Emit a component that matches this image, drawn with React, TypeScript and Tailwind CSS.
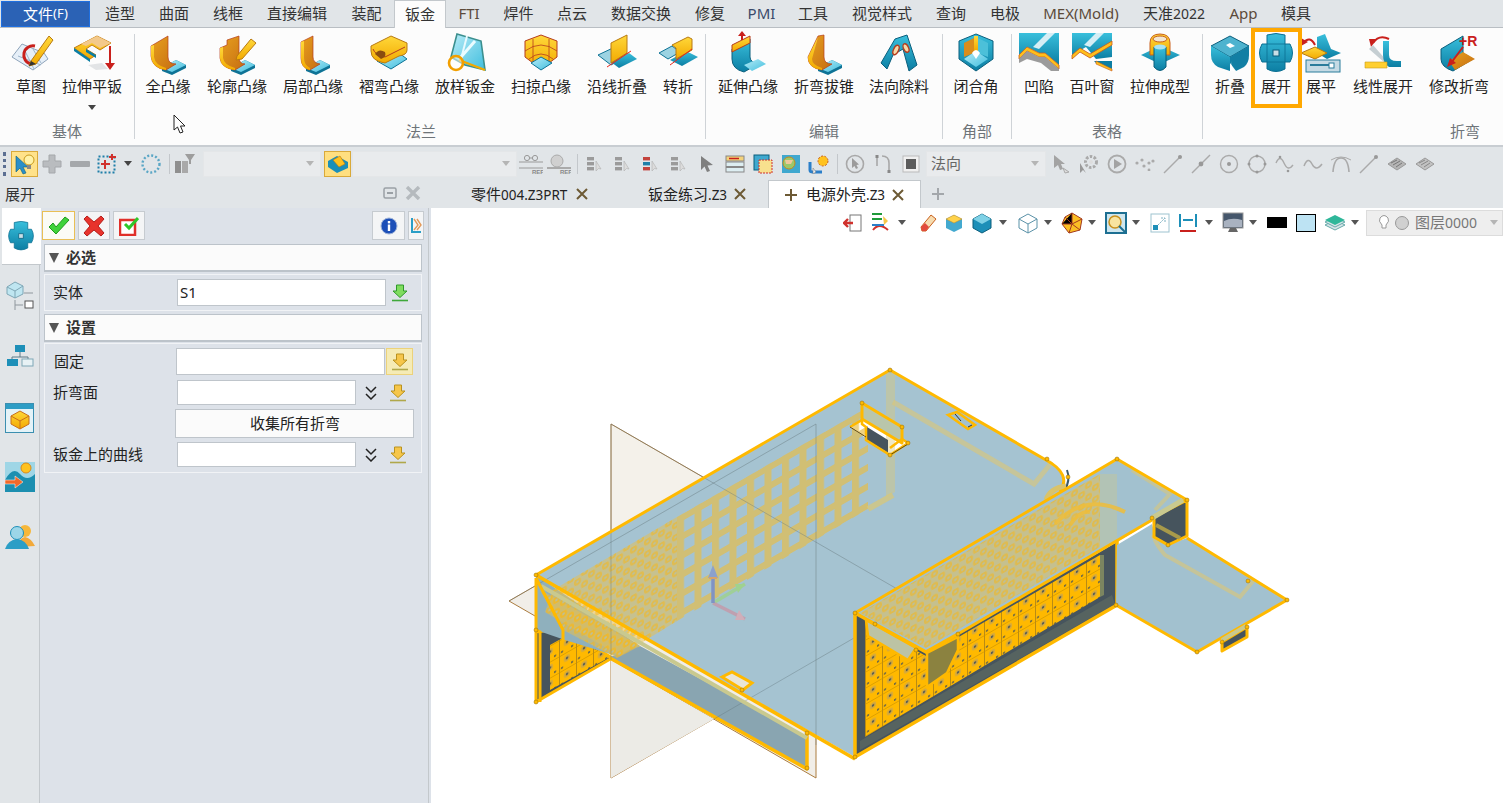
import React from "react";

const FONT = "[font-family:'Noto_Sans','Noto_Sans_CJK_SC',sans-serif]";

function Defs() {
  return (
    <svg className="absolute w-0 h-0" aria-hidden="true">
      <defs>
        <linearGradient id="gy" x1="0" y1="0" x2="0" y2="1"><stop offset="0" stopColor="#ffd83a" /><stop offset="1" stopColor="#f2a900" /></linearGradient>
        <linearGradient id="go" x1="0" y1="0" x2="1" y2="1"><stop offset="0" stopColor="#e9a11e" /><stop offset="1" stopColor="#c56d12" /></linearGradient>
        <linearGradient id="gb" x1="0" y1="0" x2="0" y2="1"><stop offset="0" stopColor="#39bfdc" /><stop offset="1" stopColor="#0c7ea3" /></linearGradient>
        <linearGradient id="gl" x1="0" y1="0" x2="1" y2="1"><stop offset="0" stopColor="#b8ecf7" /><stop offset="1" stopColor="#40bede" /></linearGradient>
        <pattern id="sq" width="17.5" height="19" patternUnits="userSpaceOnUse" patternTransform="matrix(1 -0.577 0 1 677 517)">
          <rect width="7" height="19" fill="#e6bd48" />
          <rect width="17.5" height="7" fill="#e6bd48" />
        </pattern>
        <pattern id="hx" width="14" height="12" patternUnits="userSpaceOnUse" patternTransform="matrix(1 -0.577 0 1 0 0)">
          <rect width="14" height="12" fill="#e8bf50" fillOpacity="0.5" />
          <circle cx="3.5" cy="3" r="3.6" fill="#f6b81c" fillOpacity="0.55" />
          <circle cx="10.5" cy="9" r="3.6" fill="#f6b81c" fillOpacity="0.55" />
          <circle cx="3.5" cy="3" r="1.3" fill="#a2c1cf" fillOpacity="0.6" />
          <circle cx="10.5" cy="9" r="1.3" fill="#a2c1cf" fillOpacity="0.6" />
        </pattern>
        <pattern id="ms" width="17" height="16" patternUnits="userSpaceOnUse" patternTransform="matrix(1 -0.577 0 1 865 640)">
          <rect width="17" height="16" fill="#ffb900" />
          <path d="M0 0V16" stroke="#6d5a2a" strokeWidth="0.9" />
          <path d="M0 0H17" stroke="#c98f00" strokeWidth="1.2" />
          <circle cx="8" cy="6" r="3.2" fill="#d9ab38" />
          <circle cx="8" cy="6" r="1.2" fill="#45525a" />
          <circle cx="3" cy="13" r="1.1" fill="#45525a" />
          <circle cx="13" cy="13" r="1.1" fill="#45525a" />
        </pattern>
      </defs>
    </svg>
  );
}

type P = { children: React.ReactNode };
const I40 = ({ children }: P) => <svg className="block overflow-visible" width="40" height="40" viewBox="0 0 40 40">{children}</svg>;

const Base = ({ d = 0 }: { d?: number }) => (
  <g transform={`translate(${d} 0)`}>
    <path d="M14 35 L28 27 L38 32 V35 L24 42 L14 38Z" fill="#0e7396" />
    <path d="M14 35 L28 27 L38 32 L24 39Z" fill="url(#gl)" />
  </g>
);

const Ico: Record<string, React.ReactNode> = {
  sketch: (
    <I40>
      <path d="M1 24 L11 11 L33 20 L37 26 L22 37Z" fill="#e6eff8" stroke="#8fa4ba" />
      <path d="M7 23 L30 32 M13 16 L23 36 M22 16 L30 30" stroke="#9db5cb" />
      <path d="M24 13 A9 9 0 1 0 20 31" fill="none" stroke="#c9201c" strokeWidth="3" />
      <path d="M20 28 L38 3 L42 7 L25 31 L18 33Z" fill="url(#gy)" stroke="#b97a10" />
      <path d="M18 33 L20 28 L25 31Z" fill="#333" />
    </I40>
  ),
  extrude: (
    <I40>
      <path d="M2 15 L25 3 L39 10 L28 17 L20 12 L14 16 L24 22 L18 26Z" fill="url(#gy)" stroke="#c57c10" />
      <path d="M2 15 L18 26 V29 L2 18Z M24 22 L14 16 V19 L24 25Z" fill="#0c7ea3" />
      <path d="M25 3 L39 10 L28 15 L20 10 L14 13 L9 11Z" fill="#f3c98b" />
      <path d="M38 13 V32" stroke="#c9201c" strokeWidth="2" />
      <path d="M33 30 H43 L38 37Z" fill="#c9201c" />
      <path d="M16 32 L30 30 L36 36 L24 37Z" fill="#e2e4e6" />
    </I40>
  ),
  full: (
    <I40>
      <Base />
      <path d="M3 13 L20 3 V24 Q20 31 28 31 L18 37 Q4 35 3 23Z" fill="url(#go)" stroke="#b53c1d" strokeWidth="0.7" />
      <path d="M3 13 L6 12 V24 Q7 32 18 35 V37 Q4 35 3 23Z" fill="url(#gy)" />
    </I40>
  ),
  contour: (
    <I40>
      <Base />
      <path d="M3 15 L10 12 V7 L22 3 V24 Q22 31 28 31 L18 37 Q4 35 3 25Z" fill="url(#go)" stroke="#b53c1d" strokeWidth="0.7" />
      <path d="M3 15 L6 14 V25 Q7 32 18 35 V37 Q4 35 3 25Z" fill="url(#gy)" />
      <path d="M20 23 L34 6 L39 10 L25 26 L19 27Z" fill="url(#gy)" stroke="#b97a10" />
    </I40>
  ),
  partial: (
    <I40>
      <Base d={-1} />
      <path d="M8 9 L20 3 V24 Q20 30 27 31 L17 37 Q8 35 8 25Z" fill="url(#go)" stroke="#b53c1d" strokeWidth="0.7" />
      <path d="M8 9 L11 8 V25 Q11 32 17 35 V37 Q8 35 8 25Z" fill="url(#gy)" />
    </I40>
  ),
  hem: (
    <I40>
      <path d="M8 28 L30 20 L38 26 L22 36Z" fill="url(#gl)" stroke="#0e7396" />
      <path d="M2 13 L22 3 L38 10 V17 Q38 22 30 23 L16 30 Q2 28 2 18Z" fill="url(#gy)" stroke="#b87a12" />
      <path d="M4 16 Q6 22 16 24 L36 14" fill="none" stroke="#b53c1d" />
      <path d="M6 21 Q10 15 16 19 Q18 24 12 26Z" fill="#8a4c10" />
    </I40>
  ),
  loft: (
    <I40>
      <path d="M12 1 L36 8 L40 37 L20 32 L6 24Z" fill="url(#gl)" stroke="#3b8f8e" strokeWidth="1.6" />
      <path d="M22 3 L16 26" stroke="#e8fafd" strokeWidth="2" />
      <path d="M30 8 L16 24" stroke="#eafcff" strokeWidth="3" />
      <path d="M14 27 L40 37" stroke="#f2a900" strokeWidth="2.4" />
      <circle cx="11" cy="30" r="7" fill="#fff" fillOpacity="0.5" stroke="#f29f00" strokeWidth="2.6" />
    </I40>
  ),
  sweep: (
    <I40>
      <path d="M4 8 L20 2 L36 8 V24 L20 36 L4 24Z" fill="url(#gy)" stroke="#b53c1d" />
      <path d="M4 18 Q20 6 36 18 M12 6 V30 M28 6 V30 M8 26 Q20 16 32 26" fill="none" stroke="#b53c1d" strokeWidth="0.8" />
      <path d="M10 30 L20 24 L31 30 L20 37Z" fill="url(#gl)" stroke="#0e7396" />
    </I40>
  ),
  along: (
    <I40>
      <path d="M1 22 L18 14 L32 22 L14 32Z" fill="#9cd3e2" stroke="#0e7396" />
      <path d="M14 29 L32 20 L40 26 L22 35Z" fill="url(#gb)" />
      <path d="M14 10 L30 2 L30 20 L14 30Z" fill="url(#gy)" stroke="#b87a12" />
      <path d="M10 34 L34 18" stroke="#e8261c" />
    </I40>
  ),
  jog: (
    <I40>
      <path d="M1 20 L14 13 L22 19 L10 26Z" fill="#9cd3e2" stroke="#0e7396" />
      <path d="M12 27 L28 18 L40 24 L24 33Z" fill="url(#gb)" />
      <path d="M14 12 L30 4 L34 6 V17 L18 26 V15Z" fill="url(#gy)" stroke="#b87a12" />
      <path d="M12 32 L34 16" stroke="#e8261c" />
    </I40>
  ),
  extend: (
    <I40>
      <path d="M4 16 L22 6 V24 Q22 29 30 31 L16 39 Q4 36 4 26Z" fill="url(#gb)" stroke="#0b5f7d" />
      <path d="M16 32 L30 26 L38 31 L24 38Z" fill="url(#gl)" />
      <path d="M4 12 L22 3 V10 L4 19Z" fill="url(#gy)" stroke="#b53c1d" />
      <path d="M14 7 V0" stroke="#c9201c" strokeWidth="2" />
      <path d="M10 3 H18 L14 -2Z" fill="#c9201c" />
    </I40>
  ),
  taper: (
    <I40>
      <Base />
      <path d="M4 24 L14 3 L20 2 V24 Q20 31 28 31 L18 37 Q4 35 4 24Z" fill="url(#go)" stroke="#b53c1d" strokeWidth="0.7" />
      <path d="M4 24 L14 4 L8 26 Q8 32 18 35 V37 Q4 35 4 24Z" fill="url(#gy)" />
    </I40>
  ),
  cut: (
    <I40>
      <path d="M2 30 L16 6 L28 2 L38 32 L30 38 L24 16 L14 22 L8 36Z" fill="url(#gb)" stroke="#0b5f7d" />
      <ellipse cx="17" cy="17" rx="2.5" ry="5" transform="rotate(25 17 17)" fill="#f5d9a8" stroke="#b53c1d" strokeWidth="1.4" />
      <ellipse cx="27" cy="15" rx="2.5" ry="4.5" transform="rotate(-25 27 15)" fill="#f5d9a8" stroke="#b53c1d" strokeWidth="1.4" />
    </I40>
  ),
  corner: (
    <I40>
      <path d="M3 8 L20 1 L37 8 V26 L20 38 L3 26Z" fill="url(#gb)" stroke="#0b5f7d" />
      <path d="M8 10 L18 5 V20 L8 24Z" fill="#d98d1c" />
      <path d="M22 5 L32 10 V24 L22 20Z" fill="#4cc0d9" />
      <path d="M18 3 H22 V18 H18Z" fill="url(#gy)" />
      <path d="M20 18 L32 26 L20 34 L8 26Z" fill="url(#gl)" />
      <path d="M16 20 Q20 14 24 20 L20 26Z" fill="#fff" />
    </I40>
  ),
  dimple: (
    <I40>
      <path d="M0 0 H40 V32 L26 20 L20 20 L8 14 L0 22Z" fill="url(#gb)" />
      <path d="M28 0 L14 14 L20 16 L36 0Z" fill="#d5eef5" />
      <path d="M0 22 L8 14 L20 20 L26 20 L40 32 V36 L26 24 L20 24 L8 18 L0 26Z" fill="#ffbf1a" stroke="#c75a1b" strokeWidth="0.8" />
      <path d="M0 26 L8 18 L20 24 L26 24 L40 36 V38 H32 L22 30 L8 26 L0 30Z" fill="#9b9b9b" />
    </I40>
  ),
  louver: (
    <I40>
      <path d="M0 0 H40 V24 L24 26 L14 14 L0 22Z" fill="url(#gb)" />
      <path d="M24 0 L12 12 L18 14 L32 0Z" fill="#d5eef5" />
      <path d="M0 22 L8 15 L18 21 L40 8 V12 L18 25 L8 19 L0 26Z" fill="#ffbf1a" stroke="#c75a1b" strokeWidth="0.8" />
      <path d="M22 28 H40 V36 L24 30Z" fill="#0c7ea3" />
      <path d="M24 28 L40 36 V38 L24 31Z" fill="#ffbf1a" stroke="#c75a1b" strokeWidth="0.6" />
    </I40>
  ),
  stamp: (
    <I40>
      <path d="M1 22 L20 13 L40 22 L20 31Z" fill="url(#gb)" />
      <path d="M10 10 Q10 1 20 1 Q30 1 30 10 V22 H10Z" fill="url(#gy)" stroke="#c9601c" />
      <ellipse cx="20" cy="6" rx="7" ry="3" fill="#f2e6d0" stroke="#c9601c" />
      <path d="M14 14 H26 V34 Q20 41 14 34Z" fill="url(#gb)" stroke="#0b5f7d" />
      <ellipse cx="20" cy="14" rx="6" ry="2.5" fill="#a9e3f0" />
    </I40>
  ),
  fold: (
    <I40>
      <path d="M1 13 L20 3 L39 13 L20 24Z" fill="#4eb3cf" stroke="#0b5f7d" />
      <path d="M1 13 L20 24 V38 L8 34 Q1 30 1 22Z" fill="url(#gb)" />
      <path d="M39 13 L20 24 V30 L26 38 L34 34 Q39 30 39 22Z" fill="#127fa4" />
      <path d="M22 28 Q20 36 26 38 L20 38Z" fill="#fff" />
      <path d="M16 12 L20 10 L25 13 L20 15Z" fill="#fff" />
    </I40>
  ),
  unfold: (
    <I40>
      <path d="M11 2 Q20 -1 29 2 V11 H34 Q39 20 34 29 H29 V36 Q20 41 11 36 V29 H6 Q1 20 6 11 H11Z" fill="url(#gb)" stroke="#0b6f92" />
      <path d="M11 11 H29 M11 29 H29 M11 11 V29 M29 11 V29" stroke="#0b6f92" strokeWidth="0.8" fill="none" />
      <rect x="17" y="17" width="6" height="6" fill="#c9dfe6" stroke="#0b5f7d" />
    </I40>
  ),
  flatten: (
    <I40>
      <path d="M16 4 L24 1 L30 16 L40 20 L26 26 L16 20Z" fill="url(#gb)" />
      <path d="M0 20 L14 14 L26 20 L14 26Z" fill="url(#gy)" stroke="#b87a12" />
      <path d="M14 12 Q9 2 2 10" fill="none" stroke="#c9201c" strokeWidth="2" />
      <path d="M0 5 L7 9 L0 13Z" fill="#c9201c" />
      <rect x="5" y="27" width="34" height="12" fill="#c5dae4" stroke="#2a7c9b" />
      <path d="M9 32 H28" stroke="#2a7c9b" strokeWidth="2" />
      <rect x="28" y="30" width="5" height="5" fill="#fff" stroke="#2a7c9b" />
    </I40>
  ),
  linear: (
    <I40>
      <path d="M26 6 Q16 1 10 10" fill="none" stroke="#c9201c" strokeWidth="2" />
      <path d="M6 6 L14 6 L8 14Z" fill="#c9201c" />
      <path d="M10 12 L24 28 L22 30 L6 16Z" fill="#c5ced2" />
      <path d="M20 8 H26 V22 Q26 28 34 28 H38 V34 H26 Q20 30 20 22Z" fill="url(#gb)" />
      <path d="M2 29 H24 V35 H2Z" fill="#ffcf30" stroke="#c79a1c" strokeWidth="0.6" />
    </I40>
  ),
  modify: (
    <I40>
      <path d="M2 16 L24 3 V20 L34 26 L14 38 Q2 34 2 26Z" fill="url(#gb)" stroke="#0b5f7d" />
      <path d="M10 28 L24 19 L36 26 L16 37Z" fill="url(#go)" />
      <path d="M24 14 L12 30" stroke="#c9201c" strokeWidth="2" />
      <path d="M8 34 L11 25 L17 30Z" fill="#c9201c" />
      <text x="20" y="13" fontSize="14" fontWeight="700" fill="#c9201c" fontFamily="Liberation Sans">+R</text>
    </I40>
  ),
};

function Item({ w, label, icon, caret }: { w: string; label: string; icon: string; caret?: boolean }) {
  return (
    <div className={`${w} shrink-0 flex flex-col items-center`}>
      <div className="h-[40px] w-[40px]">{Ico[icon]}</div>
      <div className="mt-[2px] text-[15px] leading-[22px] text-[#222] whitespace-nowrap">{label}</div>
      {caret && <div className="mt-[8px] w-0 h-0 border-x-[4px] border-x-transparent border-t-[5px] border-t-[#444]" />}
    </div>
  );
}

function Group({ w, label, labelCls, children }: { w: string; label: string; labelCls?: string; children: React.ReactNode }) {
  return (
    <div className={`${w} shrink-0 relative flex flex-col justify-between pt-[5px] pb-[4px]`}>
      <div className="flex">{children}</div>
      <div className={`text-[15px] leading-[20px] text-[#6e7479] ${labelCls ?? "text-center"}`}>{label}</div>
    </div>
  );
}
const Div = () => <div className="w-px my-[6px] bg-[#cfd3d7] shrink-0" />;

const menus: [string, string][] = [
  ["造型", "w-[54px]"], ["曲面", "w-[54px]"], ["线框", "w-[54px]"], ["直接编辑", "w-[84px]"], ["装配", "w-[55px]"],
];
const menus2: [React.ReactNode, string, string?][] = [
  ["FTI", "w-[46px]", "text-[#5b4a3a]"], ["焊件", "w-[53px]"], ["点云", "w-[54px]"], ["数据交换", "w-[84px]"], ["修复", "w-[54px]"],
  ["PMI", "w-[49px]", "text-[#3a4a6a]"], ["工具", "w-[54px]"], ["视觉样式", "w-[84px]"], ["查询", "w-[54px]"], ["电极", "w-[54px]"],
  ["MEX(Mold)", "w-[98px]", "text-[#5b4a3a]"], [<>天准<span className="text-[14px]">2022</span></>, "w-[88px]"], ["App", "w-[51px]", "text-[#5b4a3a]"], ["模具", "w-[54px]"],
];

function MenuBar() {
  return (
    <div className="h-[28px] flex bg-[#e1e5e8] border-b border-[#b9bec3] text-[15px] text-[#333]">
      <div className="ml-[1px] mt-[1px] w-[89px] h-[26px] bg-[#2b62b5] border border-[#1f6fe0] text-white flex items-center justify-center">文件<span className="text-[13px]">(F)</span></div>
      <div className="w-[3px]" />
      {menus.map(([t, w]) => <div key={t} className={`${w} flex items-center justify-center`}>{t}</div>)}
      <div className="w-[52px] h-[28px] bg-[#fcfcfc] border border-b-0 border-[#c3c8cc] flex items-center justify-center">钣金</div>
      {menus2.map(([t, w, c], i) => <div key={i} className={`${w} flex items-center justify-center ${c ?? ""}`}>{t}</div>)}
    </div>
  );
}

function Ribbon() {
  return (
    <div className="h-[119px] flex bg-[#fcfcfc] border-b-2 border-[#c8cdd2]">
      <Group w="w-[134px]" label="基体">
        <Item w="w-[62px]" label="草图" icon="sketch" />
        <Item w="w-[60px]" label="拉伸平钣" icon="extrude" caret />
      </Group>
      <Div />
      <Group w="w-[570px]" label="法兰" labelCls="pl-[271px]">
        <Item w="w-[66px]" label="全凸缘" icon="full" />
        <Item w="w-[72px]" label="轮廓凸缘" icon="contour" />
        <Item w="w-[80px]" label="局部凸缘" icon="partial" />
        <Item w="w-[72px]" label="褶弯凸缘" icon="hem" />
        <Item w="w-[80px]" label="放样钣金" icon="loft" />
        <Item w="w-[72px]" label="扫掠凸缘" icon="sweep" />
        <Item w="w-[80px]" label="沿线折叠" icon="along" />
        <Item w="w-[42px]" label="转折" icon="jog" />
      </Group>
      <Div />
      <Group w="w-[236px]" label="编辑">
        <Item w="w-[84px]" label="延伸凸缘" icon="extend" />
        <Item w="w-[68px]" label="折弯拔锥" icon="taper" />
        <Item w="w-[82px]" label="法向除料" icon="cut" />
      </Group>
      <Div />
      <Group w="w-[68px]" label="角部">
        <Item w="w-[66px]" label="闭合角" icon="corner" />
      </Group>
      <Div />
      <Group w="w-[190px]" label="表格">
        <Item w="w-[54px]" label="凹陷" icon="dimple" />
        <Item w="w-[52px]" label="百叶窗" icon="louver" />
        <Item w="w-[84px]" label="拉伸成型" icon="stamp" />
      </Group>
      <Div />
      <Group w="w-[300px]" label="折弯" labelCls="pl-[247px]">
        <Item w="w-[54px]" label="折叠" icon="fold" />
        <div className="relative w-[38px] shrink-0">
          <Item w="w-[38px]" label="展开" icon="unfold" />
          <div className="absolute left-[-6px] top-[-5px] w-[51px] h-[80px] border-[4px] border-[#ffa800]" />
        </div>
        <Item w="w-[52px]" label="展平" icon="flatten" />
        <Item w="w-[72px]" label="线性展开" icon="linear" />
        <Item w="w-[80px]" label="修改折弯" icon="modify" />
      </Group>
    </div>
  );
}

const G = "#9a9a9a";
const Tb = ({ children, w = "w-[28px]" }: { children: React.ReactNode; w?: string }) => (
  <div className={`${w} h-[26px] shrink-0 flex items-center justify-center`}>{children}</div>
);
const Caret = ({ c = "#555", w = "w-[10px]" }: { c?: string; w?: string }) => (
  <div className={`${w} shrink-0 flex justify-center`}>
    <svg width="8" height="5" viewBox="0 0 8 5"><path d="M0 0H8L4 5Z" fill={c} /></svg>
  </div>
);
const Sep = () => <div className="w-[8px] shrink-0 flex justify-center"><div className="w-px h-[20px] bg-[#c3c7cb]" /></div>;
const Combo = ({ w, ml, text }: { w: string; ml?: string; text?: string }) => (
  <div className={`${w} ${ml ?? ""} h-[26px] shrink-0 bg-[#e9ebed] flex items-center justify-between pl-[4px] pr-[6px] text-[15px] text-[#666] border border-[#e4e6e8]`}>
    <span>{text}</span>
    <svg width="8" height="5" viewBox="0 0 8 5"><path d="M0 0H8L4 5Z" fill="#b5b5b5" /></svg>
  </div>
);

function Toolbar() {
  return (
    <div className="h-[33px] flex items-center bg-[#e1e5e8]">
      <div className="w-[3px]" />
      <div className="w-[3px] h-[24px] border-l-[3px] border-dotted border-[#5c6f92]" />
      <div className="w-[5px]" />
      <div className="w-[27px] h-[26px] bg-[#ffe28a] border border-[#d9a93a] shrink-0 flex items-center justify-center">
        <svg width="22" height="22" viewBox="0 0 22 22">
          <path d="M2 3 L2 19 L6 15 L9 21 L12 20 L9 14 L14 14Z" fill="#2b8fc9" stroke="#0b5f7d" strokeWidth="0.6" />
          <circle cx="15" cy="7" r="5" fill="#fff2a8" stroke="#c99a1c" />
          <rect x="13" y="12" width="4" height="4" fill="#888" />
        </svg>
      </div>
      <Tb><svg width="20" height="20" viewBox="0 0 20 20"><path d="M7 1H13V7H19V13H13V19H7V13H1V7H7Z" fill="#b9bcbf" stroke="#a5a8ab" /></svg></Tb>
      <Tb><svg width="20" height="8" viewBox="0 0 20 8"><rect y="1" width="20" height="6" rx="1" fill="#a5a8ab" /></svg></Tb>
      <Tb w="w-[26px]"><svg width="20" height="20" viewBox="0 0 20 20"><rect x="1.5" y="2.5" width="16" height="16" fill="none" stroke="#1f7fa8" strokeWidth="2" strokeDasharray="2 2" /><path d="M8 6V15M4 10H13M15 0V6M12 3H19" stroke="#d0312d" strokeWidth="2" /></svg></Tb>
      <Caret c="#444" w="w-[16px]" />
      <div className="w-px" />
      <Tb><svg width="20" height="20" viewBox="0 0 20 20"><circle cx="10" cy="10" r="8.5" fill="none" stroke="#5aa6c5" strokeWidth="2.4" strokeDasharray="2 2" /></svg></Tb>
      <div className="w-[4px]" /><div className="w-px h-[20px] bg-[#c3c7cb]" /><div className="w-px" />
      <Tb><svg width="22" height="22" viewBox="0 0 22 22"><rect x="1" y="8" width="6" height="12" fill="#8f8f8f" /><rect x="8" y="8" width="6" height="12" fill="#a9a9a9" /><path d="M11 1H21L17 7V11H15V7Z" fill="#9d9d9d" /></svg></Tb>
      <div className="w-[4px]" />
      <Combo w="w-[118px]" />
      <div className="w-[3px]" />
      <div className="w-[27px] h-[26px] bg-[#ffdf80] border border-[#d9a93a] shrink-0 flex items-center justify-center">
        <svg width="22" height="20" viewBox="0 0 22 20"><path d="M1 7 L10 2 L21 8 L21 14 L10 19 L1 13Z" fill="#1b8fb8" /><path d="M6 6 L13 2 L18 10 L12 13Z" fill="#ffc21f" stroke="#b87a12" strokeWidth="0.6" /></svg>
      </div>
      <Combo w="w-[165px]" ml="ml-[1px]" />
      <Tb><svg width="24" height="20" viewBox="0 0 24 20"><path d="M0 8H24M0 14H24" stroke={G} /><circle cx="8" cy="4" r="2.6" fill="none" stroke="#999" /><circle cx="16" cy="4" r="2.6" fill="none" stroke="#999" /><path d="M10 4H14" stroke="#999" /><text x="13" y="20" fontSize="6" fill="#888" fontFamily="Liberation Sans" fontWeight="700">REF</text></svg></Tb>
      <Tb><svg width="24" height="20" viewBox="0 0 24 20"><circle cx="10" cy="7" r="6" fill="#d0d0d0" stroke="#aaa" /><path d="M0 14H24" stroke="#aaa" strokeWidth="2" /><text x="13" y="20" fontSize="6" fill="#888" fontFamily="Liberation Sans" fontWeight="700">REF</text></svg></Tb>
      <Sep />
      {["#9b9b9b", "#9b9b9b", "#c3433d", "#9b9b9b"].map((c, i) => (
        <Tb key={i}>
          <svg width="18" height="16" viewBox="0 0 18 16">
            <rect x="1" y="1" width="7" height="3.4" fill={c} />
            <rect x="1" y="6" width="7" height="3.4" fill={i === 2 ? "#1f7fa8" : c} />
            <rect x="1" y="11" width="7" height="3.4" fill={c} />
            <path d="M10 5 V15 L12.5 12.5 L15 13 Z" fill="#dcdcdc" stroke="#b0b0b0" strokeWidth="0.6" />
          </svg>
        </Tb>
      ))}
      <Tb><svg width="14" height="18" viewBox="0 0 14 18"><path d="M1 1 V15 L4.5 11.5 L7 17 L10 16 L7.5 10.5 L13 10Z" fill="#7f7f7f" /></svg></Tb>
      <Tb><svg width="20" height="18" viewBox="0 0 20 18"><rect x="1" y="1" width="18" height="5" fill="#f4d27a" stroke="#888" /><path d="M4 3.5H14" stroke="#c9201c" strokeWidth="1.5" /><rect x="1" y="7" width="18" height="4.5" fill="#ddeef2" stroke="#888" /><rect x="1" y="12.5" width="18" height="4.5" fill="#ddeef2" stroke="#888" /></svg></Tb>
      <Tb><svg width="20" height="20" viewBox="0 0 20 20"><rect x="1" y="1" width="15" height="15" fill="#3fa8cf" stroke="#0b5f7d" /><rect x="6" y="6" width="13" height="13" fill="#f8e08e" stroke="#d0312d" strokeDasharray="2 1" /></svg></Tb>
      <Tb><svg width="20" height="20" viewBox="0 0 20 20"><rect x="1" y="1" width="18" height="18" fill="#3fa8cf" /><circle cx="8" cy="9" r="6" fill="#9cc86a" stroke="#c98a1c" /><path d="M4 6H12L10 10H5Z" fill="#f0c79a" /></svg></Tb>
      <Tb><svg width="22" height="20" viewBox="0 0 22 20"><path d="M2 8 V16 Q2 18 5 18 H14" fill="none" stroke="#2b7fc9" strokeWidth="3" /><circle cx="15" cy="7" r="5" fill="#ffc21f" stroke="#c9601c" strokeDasharray="2 1.5" /><path d="M5 14 V20 L8 18Z" fill="#eee" stroke="#777" strokeWidth="0.5" /></svg></Tb>
      <Sep />
      <Tb><svg width="20" height="20" viewBox="0 0 20 20"><circle cx="10" cy="10" r="8.5" fill="none" stroke="#a8a8a8" strokeWidth="1.6" /><path d="M7 4 V14 L9.5 12 L11 15 L13 14 L11.5 11 L14 10.5Z" fill="#9b9b9b" /></svg></Tb>
      <Tb><svg width="18" height="20" viewBox="0 0 18 20"><path d="M3 3V12M15 19V9Q15 2 8 2" fill="none" stroke="#a8a8a8" strokeWidth="1.6" /><rect x="1.5" y="1" width="3" height="3" fill="#888" /><rect x="13.5" y="16" width="3" height="3" fill="#888" /></svg></Tb>
      <Tb><svg width="18" height="18" viewBox="0 0 18 18"><rect x="1" y="1" width="16" height="16" fill="#f0f0f0" stroke="#bbb" /><rect x="4" y="4" width="10" height="10" fill="#5c5c5c" /></svg></Tb>
      <Combo w="w-[120px]" ml="ml-[1px]" text="法向" />
      <div className="w-px" />
      <Tb><svg width="20" height="20" viewBox="0 0 20 20"><path d="M3 1 V14 L7 11 L9 16 L12 15 L10 10 L14 10Z" fill="#a3a3a3" /><path d="M12 14 L18 18 L14 19Z" fill="#ddd" stroke="#aaa" /></svg></Tb>
      <Tb><svg width="20" height="20" viewBox="0 0 20 20"><circle cx="12" cy="8" r="5.5" fill="none" stroke="#aaa" strokeWidth="3" strokeDasharray="2.5 1.5" /><circle cx="12" cy="8" r="2" fill="#ddd" /><path d="M1 9 V19 L4 16 L7 19Z" fill="#999" /></svg></Tb>
      <Tb><svg width="20" height="20" viewBox="0 0 20 20"><circle cx="10" cy="10" r="8.5" fill="none" stroke="#aaa" strokeWidth="1.8" /><path d="M7 5 L15 10 L7 15Z" fill="#a3a3a3" /></svg></Tb>
      <Tb><svg width="20" height="14" viewBox="0 0 20 14"><g fill="#aaa"><circle cx="2" cy="6" r="1.6" /><circle cx="7" cy="3" r="1.6" /><circle cx="9" cy="9" r="1.6" /><circle cx="14" cy="6" r="1.6" /><circle cx="14" cy="13" r="1.4" /><circle cx="18" cy="4" r="1.6" /></g></svg></Tb>
      <Tb><svg width="20" height="20" viewBox="0 0 20 20"><path d="M1 19L18 2" stroke="#aaa" strokeWidth="1.4" /><circle cx="17" cy="3" r="2" fill="#999" /></svg></Tb>
      <Tb><svg width="20" height="20" viewBox="0 0 20 20"><path d="M1 19L19 1" stroke="#aaa" strokeWidth="1.4" /><circle cx="10" cy="10" r="2.4" fill="#999" /></svg></Tb>
      <Tb><svg width="20" height="20" viewBox="0 0 20 20"><circle cx="10" cy="10" r="8.5" fill="none" stroke="#aaa" strokeWidth="1.4" /><circle cx="10" cy="10" r="2" fill="#999" /></svg></Tb>
      <Tb><svg width="20" height="20" viewBox="0 0 20 20"><circle cx="10" cy="10" r="8" fill="none" stroke="#aaa" strokeWidth="1.4" /><g fill="#999"><circle cx="10" cy="2" r="1.5" /><circle cx="10" cy="18" r="1.5" /><circle cx="2" cy="10" r="1.5" /><circle cx="18" cy="10" r="1.5" /></g></svg></Tb>
      <Tb><svg width="20" height="20" viewBox="0 0 20 20"><path d="M1 9 Q5 0 9 9 T18 11" fill="none" stroke="#aaa" strokeWidth="1.4" /><circle cx="5" cy="3" r="1.3" fill="#999" /><circle cx="13" cy="17" r="1.3" fill="#999" /></svg></Tb>
      <Tb><svg width="20" height="16" viewBox="0 0 20 16"><path d="M1 10 Q5 0 9 8 T19 8" fill="none" stroke="#aaa" strokeWidth="1.5" /></svg></Tb>
      <Tb><svg width="22" height="18" viewBox="0 0 22 18"><path d="M3 17 Q4 3 11 3 Q18 3 19 17" fill="none" stroke="#aaa" strokeWidth="1.6" /><path d="M1 5 Q11 -1 21 5" fill="none" stroke="#aaa" /></svg></Tb>
      <Tb><svg width="20" height="20" viewBox="0 0 20 20"><path d="M1 19L17 3" stroke="#aaa" strokeWidth="1.4" /><circle cx="17" cy="3" r="2" fill="#999" /></svg></Tb>
      <Tb><svg width="20" height="16" viewBox="0 0 20 16"><path d="M1 8 L10 2 L19 8 L10 14Z" fill="#b5b5b5" stroke="#999" /><path d="M4 7 L10 4 M6 9 L13 5 M9 11 L15 7" stroke="#777" /></svg></Tb>
      <Tb><svg width="20" height="16" viewBox="0 0 20 16"><path d="M1 8 L10 2 L19 8 L10 14Z" fill="#c2c2c2" stroke="#999" /><path d="M4 7 L10 4 M6 9 L13 5 M9 11 L15 7" stroke="#888" /></svg></Tb>
    </div>
  );
}

const XGold = () => (
  <svg width="14" height="14" viewBox="0 0 14 14"><path d="M2 2L12 12M12 2L2 12" stroke="#6d5a35" strokeWidth="2" /></svg>
);
const Lat = ({ children }: P) => <span className="text-[13.5px]">{children}</span>;

function TabRow() {
  return (
    <div className="h-[28px] flex bg-[#e1e5e8] text-[15px]">
      <div className="w-[431px] shrink-0 flex items-center text-[#333] pl-[5px] relative">
        展开
        <svg className="absolute left-[383px] top-[7px]" width="14" height="12" viewBox="0 0 14 12"><rect x="1" y="1" width="12" height="10" rx="1.5" fill="none" stroke="#9aa0a5" strokeWidth="1.5" /><rect x="4" y="5" width="6" height="2" fill="#9aa0a5" /></svg>
        <svg className="absolute left-[405px] top-[6px]" width="16" height="14" viewBox="0 0 16 14"><path d="M2 1L14 13M14 1L2 13" stroke="#b5babe" strokeWidth="3.4" /></svg>
      </div>
      <div className="w-[161px] shrink-0 flex items-center justify-between pl-[40px] pr-[3px] text-[#222]">
        <span>零件<Lat>004.Z3PRT</Lat></span><XGold />
      </div>
      <div className="w-[176px] shrink-0 flex items-center justify-between pl-[56px] pr-[21px] text-[#222]">
        <span>钣金练习<Lat>.Z3</Lat></span><XGold />
      </div>
      <div className="w-[153px] shrink-0 h-[28px] bg-white border-x border-t border-[#c3c8cc] flex items-center justify-between pl-[15px] pr-[15px] text-[#222]">
        <span className="flex items-center gap-[8px]">
          <svg width="14" height="14" viewBox="0 0 14 14"><path d="M7 1V13M1 7H13" stroke="#6d5a35" strokeWidth="2" /></svg>
          <span>电源外壳<Lat>.Z3</Lat></span>
        </span>
        <XGold />
      </div>
      <div className="ml-[10px] flex items-center"><svg width="14" height="14" viewBox="0 0 14 14"><path d="M7 1V13M1 7H13" stroke="#a3a7ab" strokeWidth="2" /></svg></div>
    </div>
  );
}

const Down = ({ c = "green" }: { c?: "green" | "gold" }) => (
  <svg className="block" width="18" height="18" viewBox="0 0 18 18">
    <path d="M5.5 1H12.5V7H16L9 13.5L2 7H5.5Z" fill={c === "green" ? "#7fdc5f" : "#f6c64a"} stroke={c === "green" ? "#2e9a2a" : "#b9921f"} />
    <path d="M1 16.5H17" stroke={c === "green" ? "#3fa83a" : "#b0a84a"} strokeWidth="1.6" />
  </svg>
);
const Chev = () => (
  <svg width="12" height="14" viewBox="0 0 12 14"><path d="M1 1L6 6L11 1M1 8L6 13L11 8" fill="none" stroke="#222" strokeWidth="1.5" /></svg>
);
const Tri = () => <div className="w-0 h-0 border-x-[5px] border-x-transparent border-t-[10px] border-t-[#555]" />;

const SecHead = ({ t }: { t: string }) => (
  <div className="h-[28px] ml-[4px] mr-[5px] bg-[#fbfbfb] border border-[#bcc3ca] border-b-2 flex items-center gap-[7px] pl-[4px] font-bold text-[15px] text-[#333]">
    <Tri />{t}
  </div>
);
const Inp = ({ w, v }: { w: string; v?: string }) => (
  <div className={`${w} shrink-0 bg-white border border-[#bfc5cb] flex items-center pl-[2px] text-[15px] text-[#222]`}>{v}</div>
);

const SideBtn = ({ children, cls = "" }: { children: React.ReactNode; cls?: string }) => (
  <div className={`h-[29px] bg-[#f4f5f6] border border-[#c6cbd0] shrink-0 flex items-center justify-center ${cls}`}>{children}</div>
);

function Panel() {
  return (
    <div className="flex w-[431px] shrink-0 bg-[#dde2e9]">
      <div className="w-[40px] shrink-0 bg-[#e1e5e8] border-r border-[#c3c8cc] flex flex-col items-center [&>div>svg]:block">
        <div className="w-[39px] h-[57px] bg-white ml-[1px] border-b border-[#c3c8cc] flex items-center justify-center relative left-[1px]">
          <svg width="30" height="30" viewBox="0 0 40 40"><path d="M11 2 Q20 -1 29 2 V11 H34 Q39 20 34 29 H29 V36 Q20 41 11 36 V29 H6 Q1 20 6 11 H11Z" fill="url(#gb)" stroke="#0b6f92" /><rect x="17" y="17" width="6" height="6" fill="#c9dfe6" stroke="#0b5f7d" /></svg>
        </div>
        <div className="mt-[16px]"><svg width="28" height="30" viewBox="0 0 28 30"><path d="M1 6 L9 1 L17 5 V13 L9 17 L1 13Z" fill="#bfe6f1" stroke="#7fa7b6" /><path d="M1 6 L9 10 L17 5 M9 10 V17" stroke="#7fa7b6" fill="none" /><path d="M18 12H27M9 19V29M9 24H17" stroke="#8f979d" /><rect x="19" y="20" width="8" height="7" fill="#fff" stroke="#555" /></svg></div>
        <div className="mt-[33px]"><svg width="28" height="24" viewBox="0 0 28 24"><rect x="9" y="1" width="10" height="7" fill="#1d8fb8" /><path d="M14 8V13M6 18V13H22V18" stroke="#5c7a88" fill="none" /><rect x="1" y="15" width="11" height="7" fill="#1d8fb8" /><rect x="16" y="15" width="11" height="7" fill="#e8f2f5" stroke="#7fa7b6" /></svg></div>
        <div className="mt-[35px]"><svg width="29" height="30" viewBox="0 0 29 30"><rect x="0.5" y="0.5" width="28" height="29" fill="#e4f3f8" stroke="#3b8fb0" /><rect x="1" y="1" width="27" height="5" fill="#2d9dc5" /><path d="M6 13L15 8L24 13V21L15 26L6 21Z" fill="url(#gy)" stroke="#c9701c" /><path d="M6 13L15 18L24 13M15 18V26" fill="none" stroke="#c9701c" /></svg></div>
        <div className="mt-[29px]"><svg width="30" height="30" viewBox="0 0 30 30"><rect width="30" height="30" fill="#9fd6e6" /><path d="M0 18 Q8 4 15 12 T30 12 V30 H0Z" fill="#1c8fb0" /><circle cx="21" cy="6" r="5" fill="#ffc21f" stroke="#d98a1c" /><path d="M0 18H10V14L18 20L10 26V22H0Z" fill="#f0692a" stroke="#fff" strokeWidth="0.5" /></svg></div>
        <div className="mt-[32px]"><svg width="30" height="26" viewBox="0 0 30 26"><circle cx="20" cy="7" r="6" fill="#f6b73a" /><path d="M12 23 Q14 14 20 13 Q26 14 30 22Z" fill="#f2a93a" /><circle cx="12" cy="9" r="6.5" fill="#9cd6e8" stroke="#1d8fb8" /><path d="M0 25 Q3 16 12 15 Q21 16 24 25Z" fill="#2b9ec6" /></svg></div>
      </div>
      <div className="flex-1 flex flex-col pt-[3px] border-r border-[#c3c8cc] mr-[2px] pr-px">
        <div className="flex ml-[2px] mr-[3px] mb-[4px]">
          <SideBtn cls="w-[33px] bg-[#fbfbf5] border-[#e9bf55]"><svg width="22" height="20" viewBox="0 0 22 20"><path d="M1 11L8 18L21 4L17 1L8 11L5 7Z" fill="#3fd23a" stroke="#1f9a1c" /></svg></SideBtn>
          <SideBtn cls="w-[32px] ml-[3px]"><svg width="22" height="22" viewBox="0 0 22 22"><path d="M1 4L4 1L11 7L18 1L21 4L15 11L21 18L18 21L11 15L4 21L1 18L7 11Z" fill="#e8332c" stroke="#b51f1a" /></svg></SideBtn>
          <SideBtn cls="w-[32px] ml-[3px]"><svg width="20" height="20" viewBox="0 0 20 20"><rect x="1" y="4" width="15" height="15" fill="#fff" stroke="#e0302a" strokeWidth="2.5" /><path d="M6 8L10 12L19 2" fill="none" stroke="#2fc82a" strokeWidth="3" /></svg></SideBtn>
          <div className="flex-1" />
          <SideBtn cls="w-[33px]"><svg width="18" height="18" viewBox="0 0 18 18"><circle cx="9" cy="9" r="8" fill="#1c4fb8" stroke="#9fb3d8" /><rect x="7.8" y="7.5" width="2.4" height="6.5" fill="#fff" /><rect x="7.8" y="4" width="2.4" height="2.4" fill="#fff" /></svg></SideBtn>
          <SideBtn cls="w-[16px] ml-[3px]"><svg width="12" height="18" viewBox="0 0 12 18"><path d="M2 1V15H11" fill="none" stroke="#2b9ec6" strokeWidth="2" /><path d="M4 2L8 8L4 13M7 2L11 8L7 13" fill="none" stroke="#e39a5a" strokeWidth="1.4" /></svg></SideBtn>
        </div>
        <SecHead t="必选" />
        <div className="ml-[4px] mr-[5px] mt-[2px] h-[37px] border border-[#f1f3f6] flex items-center gap-[2px]">
          <div className="w-[130px] pl-[8px] text-[15px] text-[#222] shrink-0">实体</div>
          <Inp w="w-[209px] h-[27px]" v="S1" />
          <div className="w-[24px] flex justify-center"><Down /></div>
        </div>
        <div className="mt-[3px]"><SecHead t="设置" /></div>
        <div className="ml-[4px] mr-[5px] mt-[1px] h-[130px] border border-[#f1f3f6] pt-[4px] flex flex-col text-[15px] text-[#222]">
          <div className="flex items-center h-[27px]">
            <div className="w-[131px] pl-[9px] shrink-0">固定</div>
            <Inp w="w-[209px] h-[27px]" />
            <div className="ml-px w-[27px] h-[27px] bg-[#f5ebb5] border border-[#ecd27a] flex items-center justify-center"><Down c="gold" /></div>
          </div>
          <div className="flex items-center h-[25px] mt-[5px]">
            <div className="w-[132px] pl-[8px] shrink-0">折弯面</div>
            <Inp w="w-[179px] h-[25px]" />
            <div className="w-[29px] flex justify-center"><Chev /></div>
            <div className="ml-[4px]"><Down c="gold" /></div>
          </div>
          <div className="ml-[130px] mt-[4px] w-[239px] h-[29px] bg-[#fbfbfb] border border-[#bfc5cb] flex items-center pl-[74px]">收集所有折弯</div>
          <div className="flex items-center h-[25px] mt-[4px]">
            <div className="w-[132px] pl-[8px] shrink-0">钣金上的曲线</div>
            <Inp w="w-[179px] h-[25px]" />
            <div className="w-[29px] flex justify-center"><Chev /></div>
            <div className="ml-[4px]"><Down c="gold" /></div>
          </div>
        </div>
      </div>
    </div>
  );
}

function CanvasBar() {
  const Ic = ({ children, cls = "w-[28px]" }: { children: React.ReactNode; cls?: string }) => (
    <div className={`${cls} shrink-0 flex items-center justify-center`}>{children}</div>
  );
  return (
    <div className="h-[29px] flex items-center pl-[412px] bg-white">
      <Ic cls="w-[20px]"><svg width="20" height="20" viewBox="0 0 20 20"><rect x="7" y="2" width="11" height="16" fill="#fff" stroke="#777" /><path d="M1 10H10M5 6L1 10L5 14" fill="none" stroke="#d0312d" strokeWidth="2.4" /></svg></Ic>
      <Ic cls="w-[34px]"><svg width="22" height="22" viewBox="0 0 22 22"><path d="M3 2H13M3 7H13" stroke="#1f9a3a" strokeWidth="2" /><path d="M4 18 Q10 10 19 18 " fill="none" stroke="#d0312d" strokeWidth="2" /><path d="M3 13H15" stroke="#2b7fc9" strokeWidth="2" /><path d="M14 4L19 9L15 13Z" fill="#f6c64a" /></svg></Ic>
      <Caret />
      <Ic cls="w-[28px] ml-[7px]"><svg width="20" height="20" viewBox="0 0 20 20"><path d="M3 14L13 2L18 6L8 18H4Z" fill="#f6dcb0" stroke="#c9601c" /><path d="M3 14L7 10L11 14L8 18H4Z" fill="#e24b3c" /></svg></Ic>
      <Ic cls="w-[24px]"><svg width="20" height="20" viewBox="0 0 20 20"><path d="M2 6L10 2L18 6V15L10 19L2 15Z" fill="#43a9cf" /><path d="M2 6L10 2L18 6L10 10Z" fill="#ffd24a" stroke="#c98a1c" strokeWidth="0.5" /></svg></Ic>
      <Ic cls="w-[28px] ml-[2px]"><svg width="22" height="22" viewBox="0 0 22 22"><path d="M2 7L11 2L20 7V16L11 21L2 16Z" fill="#1d8fb8" stroke="#0b5f7d" /><path d="M2 7L11 12L20 7L11 2Z" fill="#7fd1e6" /></svg></Ic>
      <div className="w-[2px]" /><Caret />
      <Ic cls="w-[28px] ml-[6px]"><svg width="22" height="22" viewBox="0 0 22 22"><path d="M2 7L11 2L20 7V16L11 21L2 16Z" fill="#fff" stroke="#5b92a8" /><path d="M2 7L11 12L20 7M11 12V21" fill="none" stroke="#5b92a8" /></svg></Ic>
      <div className="w-px" /><Caret />
      <Ic cls="w-[28px] ml-[5px]"><svg width="22" height="22" viewBox="0 0 22 22"><path d="M11 1L21 7L19 18L8 21L1 12L4 5Z" fill="#fbbf24" stroke="#a3391f" /><path d="M11 1L11 12L1 12M11 12L21 7M11 12L19 18M11 12L8 21M11 12L4 5" stroke="#a3391f" /></svg></Ic>
      <div className="w-px" /><Caret />
      <Ic cls="w-[28px] ml-[5px]"><svg width="22" height="22" viewBox="0 0 22 22"><rect x="1" y="1" width="20" height="20" fill="#cfe6ee" stroke="#1d6f92" strokeWidth="2" /><circle cx="10" cy="10" r="6" fill="#f8e4a0" stroke="#c9901c" strokeWidth="1.5" /><path d="M14 14L21 21" stroke="#1d6f92" strokeWidth="2" /></svg></Ic>
      <div className="w-px" /><Caret />
      <Ic cls="w-[28px] ml-[5px]"><svg width="20" height="20" viewBox="0 0 20 20"><rect x="1" y="1" width="18" height="18" fill="#fff" stroke="#9ec3d0" /><rect x="3" y="12" width="5" height="5" fill="#1d8fb8" /><path d="M8 12L15 5M11 5H15V9" fill="none" stroke="#7fb1c2" strokeDasharray="2 1" /></svg></Ic>
      <Ic><svg width="18" height="20" viewBox="0 0 18 20"><path d="M1 1V14M17 1V14" stroke="#1d8fb8" strokeWidth="2" /><path d="M4 7H14" stroke="#1d8fb8" strokeWidth="2" /><path d="M1 18H17" stroke="#c9201c" strokeWidth="2" /></svg></Ic>
      <div className="w-[2px]" /><Caret />
      <Ic cls="w-[28px] ml-[5px]"><svg width="22" height="22" viewBox="0 0 22 22"><rect x="1" y="1" width="20" height="15" fill="#45566b" stroke="#999" /><path d="M2 9 Q10 5 20 8 V15 H2Z" fill="#a9b2c0" /><path d="M6 20H16L14 16H8Z" fill="#666" /></svg></Ic>
      <div className="w-px" /><Caret />
      <div className="ml-[9px] w-[20px] h-[11px] bg-black shrink-0" />
      <div className="ml-[9px] w-[20px] h-[18px] bg-[#bde3f3] border border-black shrink-0" />
      <Ic cls="w-[28px] ml-[5px]"><svg width="22" height="18" viewBox="0 0 22 18"><path d="M1 11L11 16L21 11L11 6Z" fill="#d8e4e8" stroke="#6aa" /><path d="M1 8L11 13L21 8L11 3Z" fill="#d8e4e8" stroke="#6aa" /><path d="M1 6L11 11L21 6L11 1Z" fill="#2fb79a" /></svg></Ic>
      <div className="w-px" /><Caret />
      <div className="ml-[6px] w-[137px] h-[26px] bg-[#eeeeee] border border-[#dcdcdc] flex items-center pl-[10px] text-[15px] text-[#777]">
        <svg width="34" height="18" viewBox="0 0 34 18"><path d="M5 11 Q1 7 3 4 Q7 -1 11 4 Q13 7 9 11V14H5Z" fill="#fff" stroke="#999" /><circle cx="25" cy="9" r="6.5" fill="#d0d0d0" stroke="#999" /></svg>
        <span className="ml-[4px]">图层<span className="text-[14px]">0000</span></span>
        <svg className="ml-auto mr-[4px]" width="8" height="5" viewBox="0 0 8 5"><path d="M0 0H8L4 5Z" fill="#b5b5b5" /></svg>
      </div>
    </div>
  );
}

const Y = "#ffb900";
const nodes: [number, number][] = [
  [536, 575], [890, 370], [1047, 459], [1068, 477], [855, 613], [1117, 459], [1187, 500], [1287, 600], [1197, 652],
  [1116, 605], [855, 757], [536, 702], [536, 630], [807, 768], [807, 733], [862, 403], [902, 427], [908, 443], [890, 455],
  [958, 634], [1152, 518], [1248, 581], [1247, 627], [1222, 642], [1168, 545], [916, 650], [875, 624], [742, 690],
];

function Model() {
  return (
    <svg className="block w-[1072px] h-[566px]" viewBox="431 237 1072 566">
      {/* datum planes */}
      <path d="M611 424V778L918 601Z" fill="#f4f1ea" stroke="#ab7c3f" />
      <path d="M816 424V778L509 601Z" fill="#f1eee8" stroke="#ab7c3f" />
      <path d="M611 660V778L714 719Z" fill="#ecebe6" />

      {/* left end */}
      <path d="M536 632V702L612 658L565 628Z" fill="#46545d" stroke={Y} strokeWidth="3" strokeLinejoin="round" />
      <path d="M550 645L568 635L610 657L550 690Z" fill="url(#ms)" />
      <path d="M536 575V630L565 640L620 657L640 646Z" fill="#8fb0bd" />
      {/* lower flange */}
      <path d="M610 657L640 646L807 737V768Z" fill="#89a5b1" />
      <path d="M610 658L807 769V733" fill="none" stroke={Y} strokeWidth="3.5" strokeLinejoin="round" />

      {/* main plate */}
      <path d="M536 575L890 370L1046 460Q1072 474 1060 492L855 613V757Z" fill="#a2c1cf" fillOpacity="0.97" />
      <path d="M850 427L862 420L908 443L890 455Z" fill="#fff" />
      {/* mesh on plate */}
      <path d="M677 517L868 407V509L677 621Z" fill="url(#sq)" opacity="0.68" />
      <path d="M553 590L677 517V621L620 656L545 612Z" fill="url(#hx)" />
      <path d="M540 590L563 630L617 658L640 646L548 594Z" fill="url(#hx)" />
      {/* pale bands */}
      <path d="M886 373H895V492L886 497Z" fill="#dcc774" fillOpacity="0.42" />
      <path d="M868 509L893 495" stroke="#dcc774" strokeOpacity="0.7" strokeWidth="6" />
      <path d="M893 402L1034 484L1052 462" fill="none" stroke="#dcc774" strokeOpacity="0.6" strokeWidth="5" />
      {/* datum lines through the plate */}
      <path d="M611 424V660M816 424V745M816 424L509 601M611 424L918 601M714 719L918 601" fill="none" stroke="#657880" strokeOpacity="0.4" />

      {/* window */}
      <path d="M862 403L902 427V443L862 419Z" fill="#b9c6ab" stroke={Y} strokeWidth="3" strokeLinejoin="round" />
      <path d="M867 427L888 440V453L867 440Z" fill="#46545d" />
      <path d="M850 427L862 420V424L866 427V440L890 455L908 443L902 439L890 448" fill="none" stroke={Y} strokeWidth="2.5" />
      <path d="M850 427L866 437M890 455L908 444" fill="none" stroke="#5c4a1a" strokeWidth="1" />
      <path d="M948 415L957 412L975 425L968 429Z" fill="#a2c1cf" stroke={Y} strokeWidth="2.5" />
      <path d="M955 414L961 421M968 427L972 425" stroke="#333" />
      <path d="M722 677L732 672L752 683L743 690Z" fill="#e9e5d6" stroke={Y} strokeWidth="3" />

      {/* plate outline */}
      <path d="M536 575L890 370L1046 460Q1072 474 1060 492" fill="none" stroke={Y} strokeWidth="3" strokeLinejoin="round" />
      <path d="M1064 492Q1071 480 1067 470" fill="none" stroke="#3c5a6a" strokeWidth="2" />
      <path d="M1046 500Q1050 488 1066 486" fill="none" stroke="#d9c36b" strokeWidth="5" />
      <path d="M536 575L855 759" fill="none" stroke={Y} strokeWidth="3.5" />
      <path d="M541 586L807 738" fill="none" stroke="#c9c98f" strokeWidth="4" />
      <path d="M536 578V630L540 632V702M536 578L563 630V640" fill="none" stroke={Y} strokeWidth="3" />

      {/* right box: front */}
      <path d="M855 613L926 652L1117 542V605L855 757Z" fill="#46545d" />
      <path d="M865 622L926 656L1100 555V597L865 737Z" fill="url(#ms)" />
      <path d="M1100 555H1104V595L1100 597Z" fill="#7b8560" />
      <path d="M860 741L1112 595L1115 604L860 750Z" fill="#5d6962" fillOpacity="0.7" />
      {/* right box: top */}
      <path d="M855 613L1117 459L1187 500L1117 542L926 652Z" fill="#a2c1cf" />
      <path d="M860 613L1100 474V547L926 648Z" fill="url(#hx)" />
      <path d="M1100 474H1117V540L1100 550Z" fill="#d8c97a" fillOpacity="0.3" />
      <path d="M1055 524Q1085 492 1125 512M1090 512Q1080 510 1070 525" fill="none" stroke="#eebd3a" strokeOpacity="0.85" strokeWidth="4" />
      <path d="M1132 470L1170 494L1155 510" fill="none" stroke="#dcc774" strokeOpacity="0.55" strokeWidth="4" />
      {/* gussets */}
      <path d="M927 653L958 637V650L947 673L927 687Z" fill="#8b8240" stroke={Y} strokeWidth="2.5" />
      <path d="M866 620L916 648L908 660L868 636Z" fill="#bcc3a4" stroke={Y} strokeWidth="2.5" strokeLinejoin="round" />
      <path d="M855 613L926 652L958 634" fill="none" stroke={Y} strokeWidth="3.5" />
      <path d="M855 613V757L1117 605V540" fill="none" stroke={Y} strokeWidth="3.5" strokeLinejoin="round" />
      <path d="M855 613L1117 459L1187 500" fill="none" stroke={Y} strokeWidth="3" strokeLinejoin="round" />
      <path d="M958 634L1152 520" fill="none" stroke={Y} strokeWidth="3" />

      {/* right flap */}
      <path d="M1117 545L1152 524L1156 538L1168 545L1187 538L1287 600L1197 652L1116 605Z" fill="#a2c1cf" />
      <path d="M1153 535Q1156 545 1165 555L1240 597L1254 580" fill="none" stroke="#dcc774" strokeOpacity="0.6" strokeWidth="4" />
      <path d="M1187 538L1287 600L1197 652L1116 605" fill="none" stroke={Y} strokeWidth="3" strokeLinejoin="round" />
      <path d="M1154 517L1187 500V536L1168 545L1154 537Z" fill="#46545d" stroke={Y} strokeWidth="3" strokeLinejoin="round" />
      <path d="M1156 525L1180 538" stroke="#a89a4a" strokeWidth="4" />
      <path d="M1152 518L1183 500" stroke="#c9c98f" strokeWidth="5" />
      <path d="M1222 642L1247 627V637L1222 651Z" fill="#46545d" stroke={Y} strokeWidth="3" strokeLinejoin="round" />
      <path d="M1222 640L1246 626" stroke="#c9c98f" strokeWidth="4" />

      {nodes.map(([x, y], i) => <circle key={i} cx={x} cy={y} r="2" fill={Y} stroke="#8a6a10" strokeWidth="0.5" />)}

      {/* triad */}
      <path d="M713 603L745 584" stroke="#9fd28f" strokeWidth="3.5" opacity="0.85" />
      <path d="M735 584L745 584L738 593Z" fill="#9fd28f" />
      <path d="M713 603L745 619" stroke="#c49bab" strokeWidth="3.5" opacity="0.85" />
      <path d="M735 620L745 620L739 610Z" fill="#d0aeb9" />
      <path d="M713 603V570" stroke="#7f93c4" strokeWidth="3.5" />
      <path d="M708 578L713 565L718 578Z" fill="#8ba0cc" />
      <path d="M709 578H717" stroke="#d7a36a" strokeWidth="2" />
    </svg>
  );
}

export default function App() {
  return (
    <div className={`w-[1503px] h-[803px] overflow-hidden relative bg-white ${FONT}`}>
      <Defs />
      <MenuBar />
      <Ribbon />
      <Toolbar />
      <TabRow />
      <div className="flex h-[595px]">
        <Panel />
        <div className="flex-1 flex flex-col min-w-0">
          <CanvasBar />
          <Model />
        </div>
      </div>
      <svg className="absolute left-[173px] top-[114px]" width="14" height="20" viewBox="0 0 14 20">
        <path d="M1 1V16L4.5 13L7 19L10 18L7.5 12L12 12Z" fill="#fff" stroke="#222" />
      </svg>
    </div>
  );
}
